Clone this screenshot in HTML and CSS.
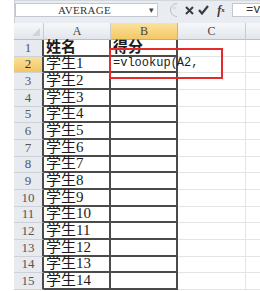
FILE: index.html
```html
<!DOCTYPE html>
<html lang="zh">
<head>
<meta charset="UTF-8" />
<meta name="viewport" content="width=device-width, initial-scale=1" />
<title>vlookup</title>
<link rel="stylesheet" href="styles.css">
</head>
<body>
    <div class="app">
        <div class="fbar">
            <div class="namebox">
                <span class="name-text">AVERAGE</span>
                <span class="drop">&#9662;</span>
            </div>
            <div class="split">
                <svg width="10" height="14" viewBox="0 0 10 14">
                    <path d="M9 0.5 A6.5 6.5 0 0 0 9 13.5" fill="none" stroke="#b8bec6" stroke-width="1"/>
                    <path d="M5 5 H8" stroke="#c6cbd2" stroke-width="1"/>
                </svg>
            </div>
            <div class="btn btn-x">
                <svg width="9" height="9" viewBox="0 0 9 9">
                    <path d="M1 1 L8 8 M8 1 L1 8" stroke="#3c3c3c" stroke-width="2"/>
                </svg>
            </div>
            <div class="btn btn-ok">
                <svg width="11" height="10" viewBox="0 0 11 10">
                    <path d="M1 5 L4 8.5 L10 1" fill="none" stroke="#3c3c3c" stroke-width="2.2"/>
                </svg>
            </div>
            <div class="btn btn-fx"><i>f</i><sub>x</sub></div>
            <div class="finput">=v</div>
        </div>

        <div class="grid">
            <!-- 列标题 -->
            <div class="corner">
                <svg width="8" height="8" viewBox="0 0 8 8"><path d="M8 0 L8 8 L0 8 Z" fill="#d0d5db"/></svg>
            </div>
            <div class="colhead">A</div>
            <div class="colhead sel">B</div>
            <div class="colhead">C</div>
            <div class="colhead last"></div>

            <div class="rowhead">1</div>
            <div class="cell bd bold">姓名</div>
            <div class="cell bd bold">得分</div>
            <div class="cell"></div>
            <div class="cell last"></div>

            <div class="rowhead sel">2</div>
            <div class="cell bd">学生1</div>
            <div class="cell bd edit">=vlookup(<span class="caret"></span>A2,</div>
            <div class="cell"></div>
            <div class="cell last"></div>

            <div class="rowhead">3</div>
            <div class="cell bd">学生2</div>
            <div class="cell bd"></div>
            <div class="cell"></div>
            <div class="cell last"></div>

            <div class="rowhead">4</div>
            <div class="cell bd">学生3</div>
            <div class="cell bd"></div>
            <div class="cell"></div>
            <div class="cell last"></div>

            <div class="rowhead">5</div>
            <div class="cell bd">学生4</div>
            <div class="cell bd"></div>
            <div class="cell"></div>
            <div class="cell last"></div>

            <div class="rowhead">6</div>
            <div class="cell bd">学生5</div>
            <div class="cell bd"></div>
            <div class="cell"></div>
            <div class="cell last"></div>

            <div class="rowhead">7</div>
            <div class="cell bd">学生6</div>
            <div class="cell bd"></div>
            <div class="cell"></div>
            <div class="cell last"></div>

            <div class="rowhead">8</div>
            <div class="cell bd">学生7</div>
            <div class="cell bd"></div>
            <div class="cell"></div>
            <div class="cell last"></div>

            <div class="rowhead">9</div>
            <div class="cell bd">学生8</div>
            <div class="cell bd"></div>
            <div class="cell"></div>
            <div class="cell last"></div>

            <div class="rowhead">10</div>
            <div class="cell bd">学生9</div>
            <div class="cell bd"></div>
            <div class="cell"></div>
            <div class="cell last"></div>

            <div class="rowhead">11</div>
            <div class="cell bd">学生10</div>
            <div class="cell bd"></div>
            <div class="cell"></div>
            <div class="cell last"></div>

            <div class="rowhead">12</div>
            <div class="cell bd">学生11</div>
            <div class="cell bd"></div>
            <div class="cell"></div>
            <div class="cell last"></div>

            <div class="rowhead">13</div>
            <div class="cell bd">学生12</div>
            <div class="cell bd"></div>
            <div class="cell"></div>
            <div class="cell last"></div>

            <div class="rowhead">14</div>
            <div class="cell bd">学生13</div>
            <div class="cell bd"></div>
            <div class="cell"></div>
            <div class="cell last"></div>

            <div class="rowhead">15</div>
            <div class="cell bd">学生14</div>
            <div class="cell bd"></div>
            <div class="cell"></div>
            <div class="cell last"></div>

            <!-- 红框标注 -->
            <div class="mark"></div>
        </div>
    </div>
</body>
</html>
```

FILE: styles.css
```css
body {
    margin: 0;
    background: #ffffff;
    font-family: "Liberation Serif", "Noto Sans CJK SC", serif;
    color: #1a1a1a;
    overflow: hidden;
}

.app {
    margin-left: 14px;
    width: 246px;
}

/* 编辑栏 */
.fbar {
    height: 23px;
    box-sizing: border-box;
    display: flex;
    align-items: flex-start;
    padding-top: 2px;
    background: #e9edf2;
    border-top: 1px solid #d3d8de;
    border-left: 1px solid #c9ced5;
}

.namebox {
    width: 143px;
    height: 14px;
    box-sizing: border-box;
    background: #ffffff;
    border: 1px solid #c2c8d0;
    display: flex;
    align-items: center;
}

.name-text {
    flex: 1;
    text-align: center;
    font-size: 11px;
    letter-spacing: 0.3px;
    color: #333;
    padding-left: 8px;
}

.drop {
    width: 12px;
    font-size: 9px;
    color: #444;
    text-align: center;
}

.split {
    width: 23px;
    height: 14px;
    display: flex;
    justify-content: flex-end;
    padding-right: 3px;
    box-sizing: border-box;
}

.btn {
    height: 14px;
    display: flex;
    align-items: center;
    justify-content: center;
}

.btn-x {
    width: 16px;
}

.btn-ok {
    width: 13px;
}

.btn-fx {
    width: 22px;
    font-size: 12px;
    color: #3a3a3a;
    font-weight: bold;
}

.btn-fx sub {
    font-size: 7px;
    vertical-align: -1px;
}

.finput {
    flex: 1;
    height: 14px;
    box-sizing: border-box;
    background: #ffffff;
    border: 1px solid #c2c8d0;
    border-right: none;
    font-family: "Liberation Mono", monospace;
    font-size: 12px;
    line-height: 12px;
    padding-left: 13px;
    color: #333;
    overflow: hidden;
}

/* 表格 */
.grid {
    position: relative;
    display: grid;
    grid-template-columns: 30px 67px 67px 68px 14px;
    grid-template-rows: 17px repeat(15, 16.67px);
}

.corner,
.colhead {
    box-sizing: border-box;
    background: linear-gradient(#f6f8fa, #e2e6eb);
    border-right: 1px solid #c7ccd3;
    border-bottom: 1px solid #b9bfc7;
}

.corner {
    display: flex;
    align-items: flex-end;
    justify-content: flex-end;
    padding: 0 3px 3px 0;
}

.colhead {
    display: flex;
    align-items: center;
    justify-content: center;
    font-size: 12px;
    color: #454545;
}

.colhead.sel {
    background: linear-gradient(#fbe29c, #f3c866);
    border-right-color: #d9b25a;
    border-bottom-color: #e0a93a;
}

.colhead.last {
    border-right: none;
}

.rowhead {
    box-sizing: border-box;
    background: #e7ebf0;
    border-bottom: 1px solid #cdd2d8;
    border-right: 2px solid #4a4a4a;
    display: flex;
    align-items: center;
    justify-content: center;
    font-size: 13px;
    color: #555;
}

.rowhead.sel {
    background: linear-gradient(#fbe09a, #f2c662);
    color: #333;
}

.cell {
    box-sizing: border-box;
    border-right: 1px solid #e1e4e8;
    border-bottom: 1px solid #e1e4e8;
    display: flex;
    align-items: center;
    padding-left: 2px;
    font-size: 15px;
    line-height: 15px;
    white-space: nowrap;
}

.cell.last {
    border-right: none;
}

.cell.bd {
    border-right: 2px solid #4a4a4a;
    border-bottom: 2px solid #4a4a4a;
}

.bold {
    font-weight: bold;
}

.edit {
    overflow: visible;
    position: relative;
    z-index: 1;
    font-family: "Liberation Mono", monospace;
    font-size: 12px;
    color: #222;
}

.caret {
    display: inline-block;
    width: 1px;
    height: 13px;
    background: #222;
    margin-right: -1px;
    vertical-align: -4px;
}

.mark {
    position: absolute;
    left: 95px;
    top: 25px;
    width: 114px;
    height: 31px;
    box-sizing: border-box;
    border: 2px solid #e52a2a;
    z-index: 2;
}
```
